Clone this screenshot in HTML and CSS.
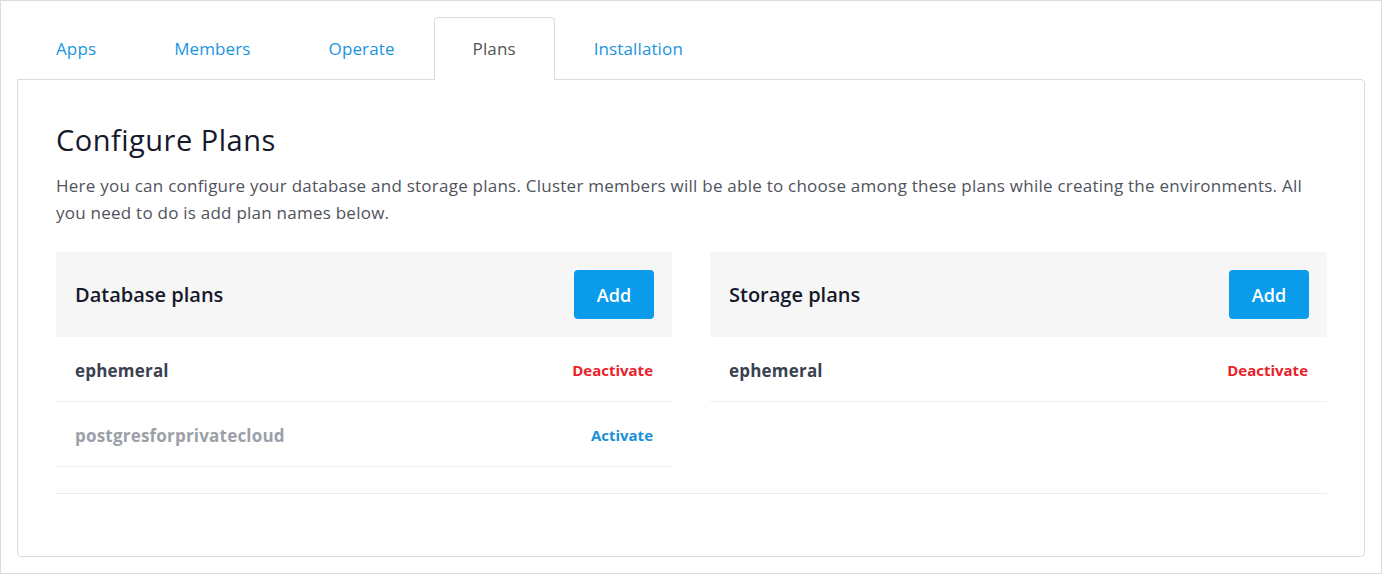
FILE: index.html
```html
<!DOCTYPE html>
<html>
<head>
<meta charset="utf-8">
<link rel="stylesheet" href="styles.css">
</head>
<body>
<div class="frame">
  <nav class="tabs">
    <a class="tab">Apps</a>
    <a class="tab">Members</a>
    <a class="tab">Operate</a>
    <a class="tab active">Plans</a>
    <a class="tab">Installation</a>
  </nav>
  <section class="panel">
    <h1 class="title">Configure Plans</h1>
    <p class="desc">Here you can configure your database and storage plans. Cluster members will be able to choose among these plans while creating the environments. All you need to do is add plan names below.</p>
    <div class="plans">
      <div class="plan-col">
        <div class="plan-head">
          <h2 class="plan-title">Database plans</h2>
          <button class="btn-add">Add</button>
        </div>
        <div class="plan-row">
          <span class="plan-name">ephemeral</span>
          <a class="action deactivate">Deactivate</a>
        </div>
        <div class="plan-row">
          <span class="plan-name inactive">postgresforprivatecloud</span>
          <a class="action activate">Activate</a>
        </div>
      </div>
      <div class="plan-col">
        <div class="plan-head">
          <h2 class="plan-title">Storage plans</h2>
          <button class="btn-add">Add</button>
        </div>
        <div class="plan-row">
          <span class="plan-name">ephemeral</span>
          <a class="action deactivate">Deactivate</a>
        </div>
      </div>
    </div>
  </section>
</div>
</body>
</html>
```
FILE: styles.css
```css
html, body {
  margin: 0;
  padding: 0;
  background: #fff;
}
body {
  font-family: "Open Sans", "Noto Sans", sans-serif;
}
.frame {
  box-sizing: border-box;
  width: 1382px;
  height: 574px;
  border: 1px solid #dcdcdc;
  padding: 16px 16px 16px 16px;
}
.tabs {
  display: flex;
  height: 63px;
  position: relative;
  z-index: 1;
}
.tab {
  box-sizing: border-box;
  height: 63px;
  border: 1px solid transparent;
  border-bottom: none;
  padding: 0 38px 2px 38px;
  display: flex;
  align-items: center;
  font-size: 17px;
  letter-spacing: 0.12px;
  color: #1b95e0;
  border-radius: 4px 4px 0 0;
  cursor: pointer;
}
.tab.active {
  background: #fff;
  border-color: #dcdcdc;
  color: #555;
}
.panel {
  box-sizing: border-box;
  height: 478px;
  margin-top: -1px;
  border: 1px solid #dcdcdc;
  border-radius: 0 4px 4px 4px;
  padding: 38px 37px 38px 38px;
}
.title {
  margin: 2px 0 0 0;
  font-size: 29px;
  font-weight: 400;
  letter-spacing: 0.5px;
  line-height: 40px;
  color: #15192b;
}
.desc {
  margin: 12px 0 0 0;
  font-size: 17px;
  letter-spacing: 0.24px;
  line-height: 27px;
  color: #4f535c;
}
.plans {
  margin-top: 26px;
  display: grid;
  grid-template-columns: 616px 617px;
  column-gap: 38px;
  padding-bottom: 26px;
  border-bottom: 1px solid #ececec;
}
.plan-head {
  display: flex;
  align-items: center;
  justify-content: space-between;
  background: #f6f6f6;
  padding: 18px 18px 18px 19px;
}
.plan-title {
  margin: 0;
  font-size: 20px;
  font-weight: 600;
  color: #15192b;
}
.btn-add {
  width: 80px;
  height: 49px;
  border: none;
  border-radius: 4px;
  background: #0a9bea;
  color: #fff;
  font-family: inherit;
  font-size: 18px;
  font-weight: 600;
  cursor: pointer;
}
.plan-row {
  display: flex;
  align-items: center;
  justify-content: space-between;
  height: 64px;
  border-bottom: 1px solid #f0f0f0;
  padding: 0 19px;
}
.plan-name {
  font-size: 17px;
  font-weight: 700;
  letter-spacing: 0.2px;
  color: #3a4150;
  padding-top: 2px;
}
.plan-name.inactive {
  color: #9ca0a8;
}
.action {
  font-size: 15px;
  font-weight: 700;
  color: #e8222b;
  padding-top: 2px;
  cursor: pointer;
}
.deactivate {
  color: #e8222b;
}
.activate {
  color: #1b8fd8;
}
```
